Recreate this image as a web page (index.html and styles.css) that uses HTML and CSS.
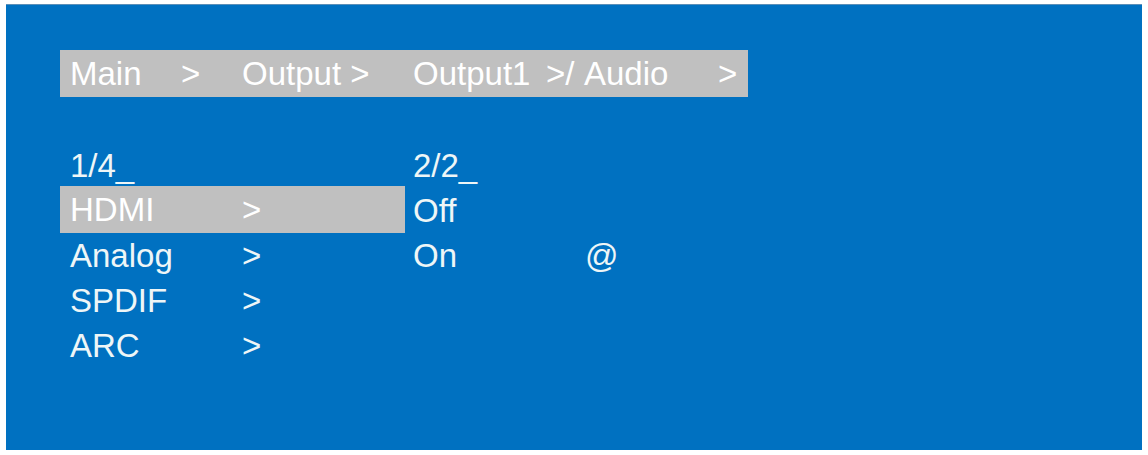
FILE: index.html
```html
<!DOCTYPE html>
<html>
<head>
<meta charset="utf-8">
<link rel="stylesheet" href="styles.css">
</head>
<body>
<div class="screen">
  <div class="crumbs">
    <span class="c-main">Main</span>
    <span class="c-sep">&gt;</span>
    <span class="c-out">Output &gt;</span>
    <span class="c-out1">Output1</span>
    <span class="c-slash">&gt;/</span>
    <span class="c-audio">Audio</span>
    <span class="c-end">&gt;</span>
  </div>
  <div class="menus">
    <div class="col left">
      <div class="row"><span class="label">1/4_</span></div>
      <div class="row sel"><span class="label">HDMI</span><span>&gt;</span></div>
      <div class="row"><span class="label">Analog</span><span>&gt;</span></div>
      <div class="row"><span class="label">SPDIF</span><span>&gt;</span></div>
      <div class="row"><span class="label">ARC</span><span>&gt;</span></div>
    </div>
    <div class="col right">
      <div class="row"><span class="label">2/2_</span></div>
      <div class="row"><span class="label">Off</span></div>
      <div class="row"><span class="label">On</span><span>@</span></div>
    </div>
  </div>
</div>
</body>
</html>
```

FILE: styles.css
```css
html, body {
  margin: 0;
  padding: 0;
  background: #ffffff;
}
body {
  font-family: "Liberation Sans", Arial, sans-serif;
}
.screen {
  margin: 4px 6px 0 6px;
  width: 1136px;
  height: 446px;
  background: #0071c1;
  box-sizing: border-box;
  padding: 45px 0 0 54px;
  color: #eef6f7;
  font-size: 33px;
  border-top: 1px solid #5b8fb8;
}
.crumbs {
  width: 688px;
  height: 47px;
  line-height: 47px;
  background: #c0c0c0;
  color: #ffffff;
  display: flex;
  box-sizing: border-box;
  padding-left: 10px;
  white-space: pre;
}
.c-main { width: 111px; }
.c-sep { width: 61px; }
.c-out { width: 171px; }
.c-out1 { width: 133px; }
.c-slash { width: 38px; }
.c-audio { width: 134px; }
.menus {
  display: flex;
  margin-top: 46px;
}
.col.left {
  width: 345px;
}
.row {
  display: flex;
  height: 45px;
  line-height: 45px;
  white-space: pre;
}
.left .row {
  padding-left: 10px;
}
.right .row {
  padding-left: 8px;
}
.label {
  width: 172px;
}
.row.sel {
  background: #c0c0c0;
  color: #ffffff;
  height: 47px;
  line-height: 47px;
  margin-top: -2px;
}
```
